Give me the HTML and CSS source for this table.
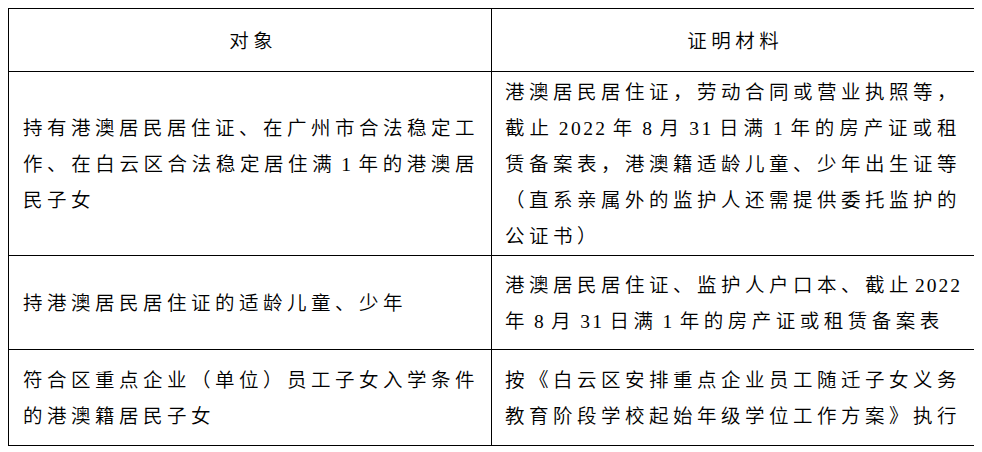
FILE: index.html
```html
<!DOCTYPE html>
<html lang="zh-CN">
<head>
<meta charset="utf-8">
<title>港澳居民子女入学证明材料</title>
<link rel="stylesheet" href="styles.css">
</head>
<body>
<table class="tbl">
  <colgroup><col class="c1"><col class="c2"></colgroup>
  <thead>
    <tr class="r-head">
      <th class="cl">对象</th>
      <th class="cr">证明材料</th>
    </tr>
  </thead>
  <tbody>
    <tr class="r1">
      <td class="cl">
        <span class="ln j">持有港澳居民居住证、在广州市合法稳定工</span>
        <span class="ln j">作、在白云区合法稳定居住满<span class="n">1</span>年的港澳居</span>
        <span class="ln">民子女</span>
      </td>
      <td class="cr">
        <span class="ln j">港澳居民居住证，劳动合同或营业执照等，</span>
        <span class="ln j">截止<span class="n">2022</span>年<span class="n">8</span>月<span class="n">31</span>日满<span class="n">1</span>年的房产证或租</span>
        <span class="ln j">赁备案表，港澳籍适龄儿童、少年出生证等</span>
        <span class="ln j">（直系亲属外的监护人还需提供委托监护的</span>
        <span class="ln">公证书）</span>
      </td>
    </tr>
    <tr class="r2">
      <td class="cl">
        <span class="ln">持港澳居民居住证的适龄儿童、少年</span>
      </td>
      <td class="cr">
        <span class="ln j">港澳居民居住证、监护人户口本、截止<span class="n tight">2022</span></span>
        <span class="ln">年<span class="n">8</span>月<span class="n">31</span>日满<span class="n">1</span>年的房产证或租赁备案表</span>
      </td>
    </tr>
    <tr class="r3">
      <td class="cl">
        <span class="ln j">符合区重点企业（单位）员工子女入学条件</span>
        <span class="ln">的港澳籍居民子女</span>
      </td>
      <td class="cr">
        <span class="ln j">按《白云区安排重点企业员工随迁子女义务</span>
        <span class="ln j">教育阶段学校起始年级学位工作方案》执行</span>
      </td>
    </tr>
  </tbody>
</table>
</body>
</html>
```

FILE: styles.css
```css
html, body {
  background: #ffffff;
}

body {
  margin: 8px;
  color: #000000;
  font-family: "Liberation Serif", "Noto Sans CJK SC", serif;
}

.tbl {
  border-collapse: separate;
  border-spacing: 0;
  table-layout: fixed;
  width: 967px;
  border-top: 1px solid #000;
  border-left: 1px solid #000;
}

.c1, .c2 {
  width: 483px;
}

.tbl th,
.tbl td {
  border-right: 1px solid #000;
  border-bottom: 1px solid #000;
  box-sizing: border-box;
  padding: 3px 12px 0 14px;
  vertical-align: middle;
  font-size: 19.5px;
  font-weight: 350;
  letter-spacing: 4.5px;
  line-height: 36px;
  text-align: left;
}

.tbl .cr {
  padding-left: 13px;
  padding-right: 13px;
}

.tbl th {
  text-align: center;
  text-indent: 4.5px;
}

.r-head th { height: 63px; }
.r1 td { height: 183px; }
.r2 td { height: 94px; }
.r3 td { height: 96px; }

.ln {
  display: block;
  white-space: nowrap;
}

.j {
  text-align: justify;
  text-align-last: justify;
}

.n {
  letter-spacing: 2.4px;
  margin: 0 5px;
}

.n.tight {
  letter-spacing: 2px;
  margin: 0 0 0 2px;
}
```
